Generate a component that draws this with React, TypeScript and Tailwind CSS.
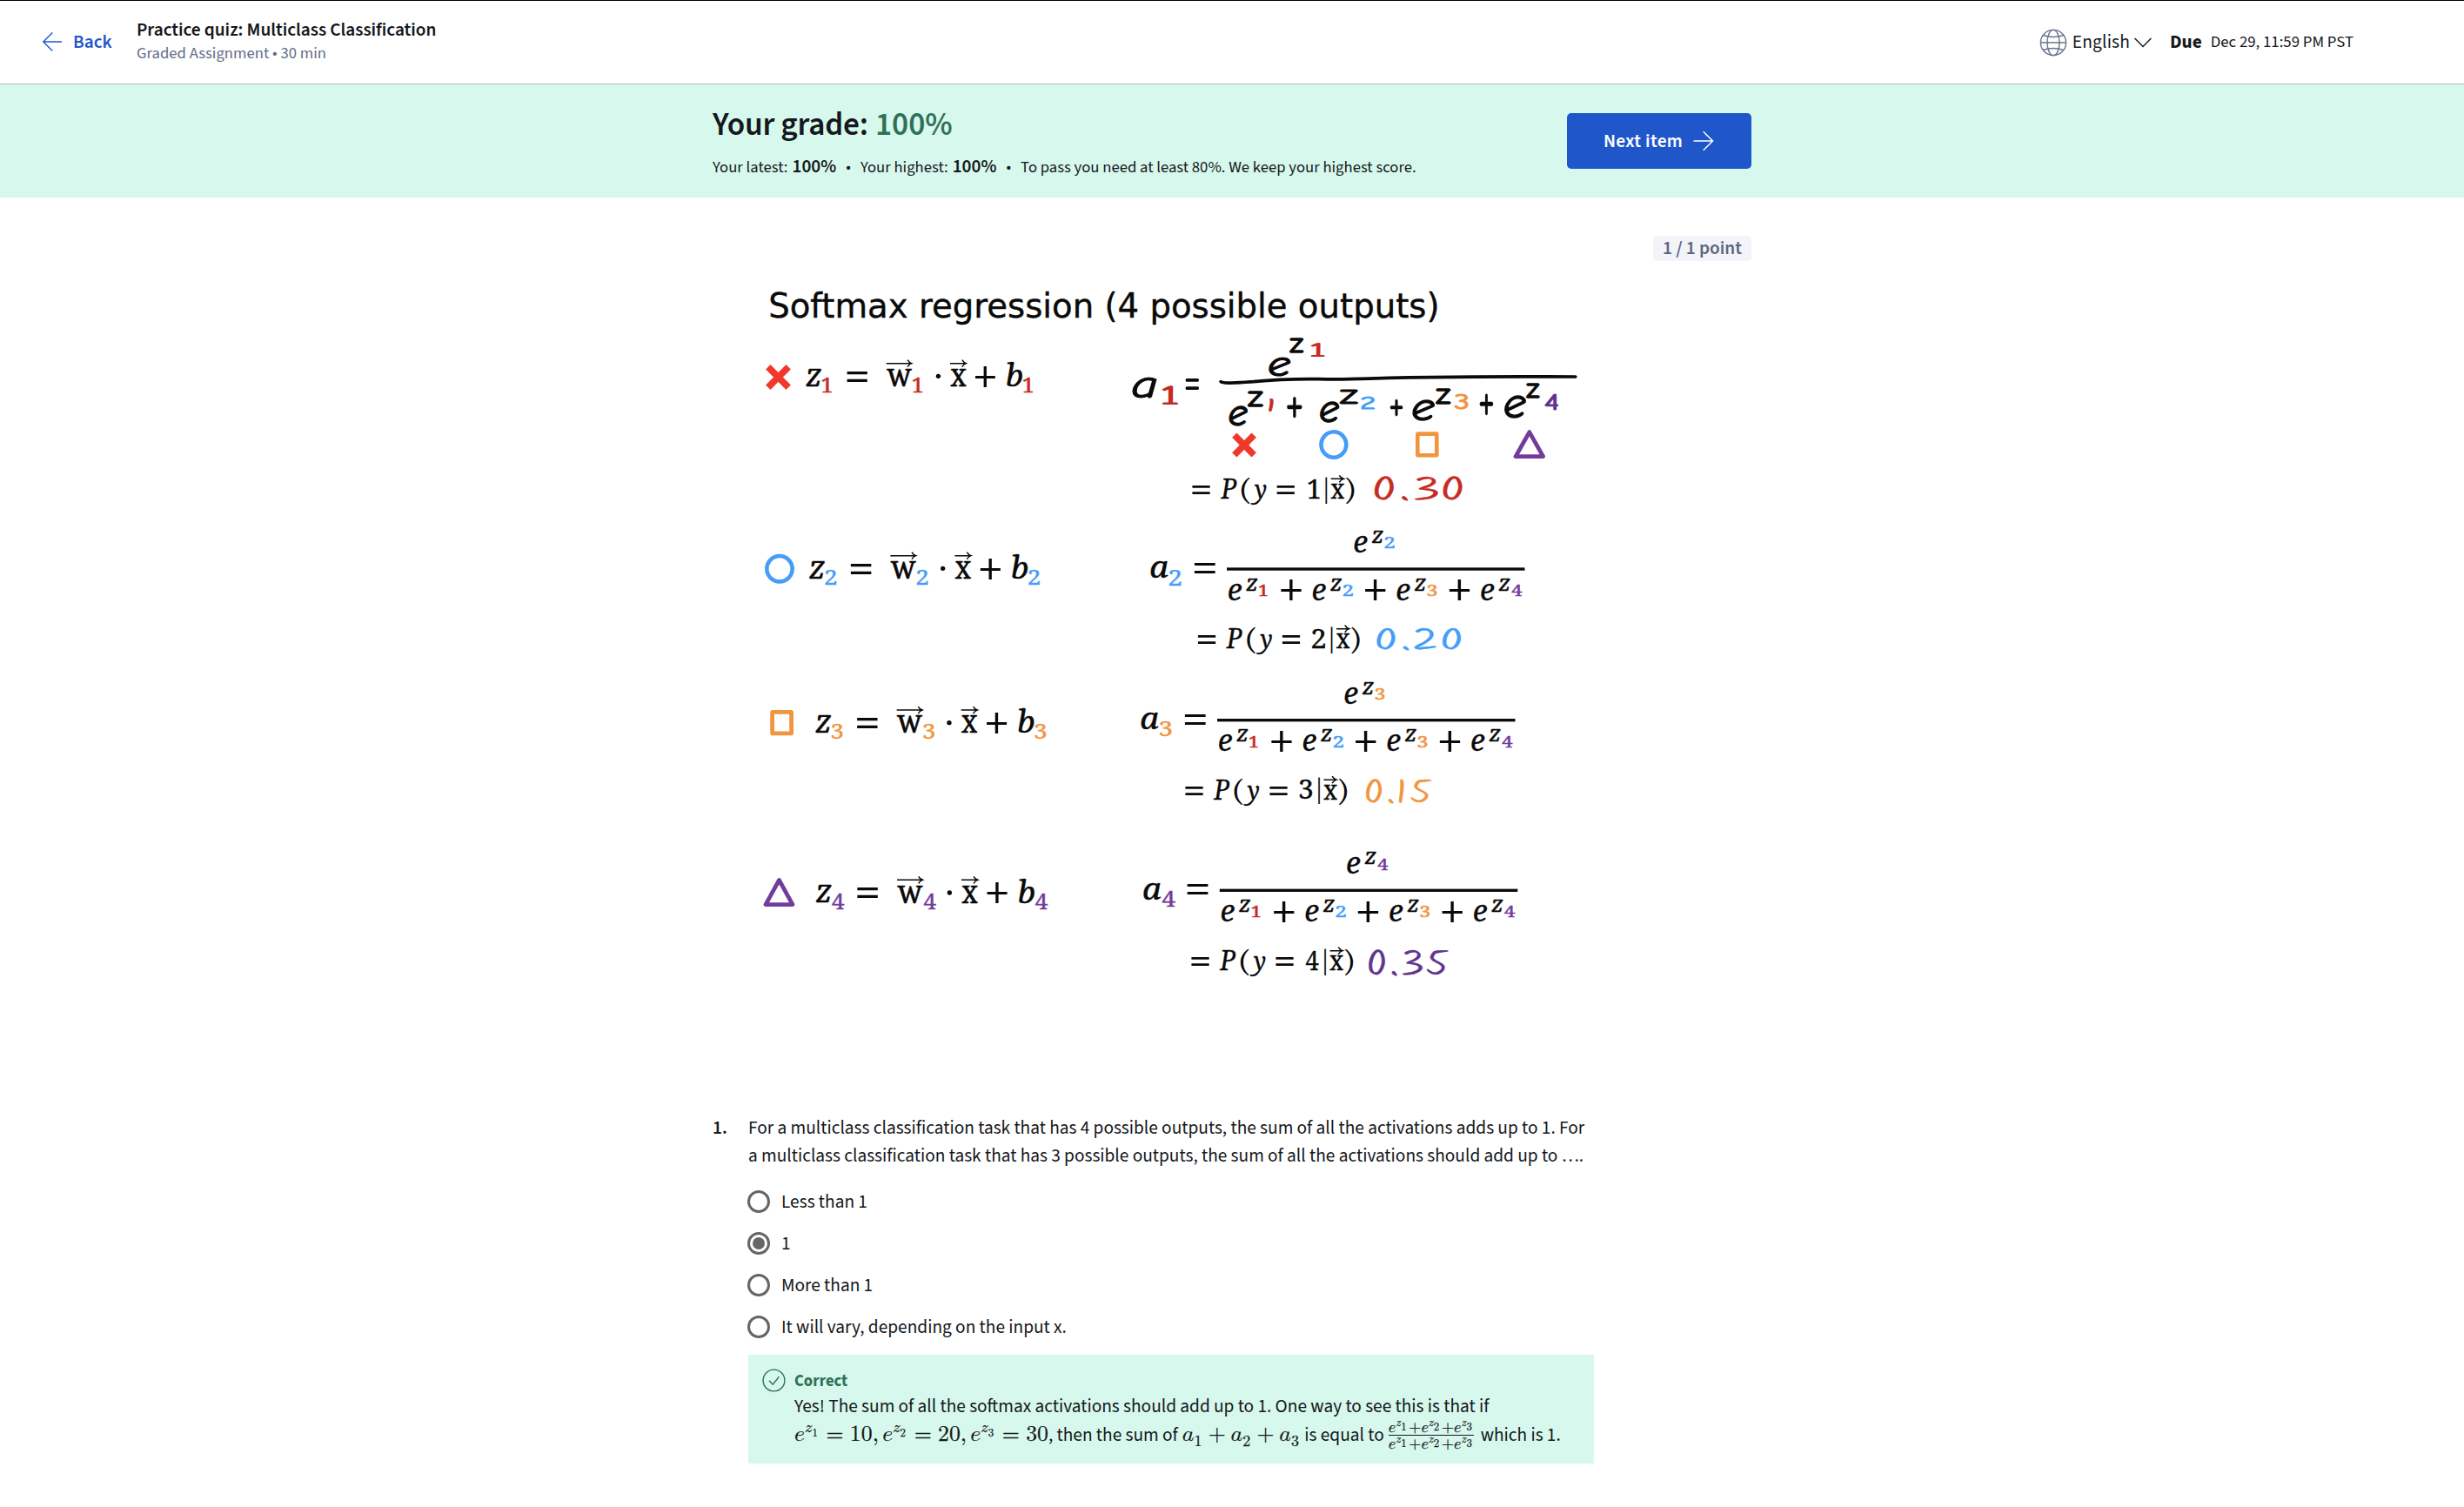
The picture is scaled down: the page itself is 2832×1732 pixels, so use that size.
import React from 'react';

const RED = '#c62b22';
const BLUE = '#459df8';
const ORANGE = '#f1953f';
const PURPLE = '#733c9c';
const SUB = ['', RED, BLUE, ORANGE, PURPLE];

const SERIF = 'Caladea, Cambria, "Liberation Serif", serif';
const DIGITS = '"Noto Serif", "Liberation Serif", serif';
const HAND = '"Comic Neue", "Comic Relief", "DejaVu Sans", sans-serif';
const HAND_ONE = '"Comic Relief", "DejaVu Sans", sans-serif';
const PEN = 'Kalam, "Comic Neue", "DejaVu Sans", sans-serif';
const SANS = 'Verdana, "DejaVu Sans", sans-serif';

const ctx = document.createElement('canvas').getContext('2d')!;

type FitProps = {
  t: string;
  /** ink box: left, top, right, bottom */
  b: [number, number, number, number];
  f?: string;
  i?: boolean;
  w?: number;
  c?: string;
  /** outline width in screen pixels */
  s?: number;
  /** backward slant */
  q?: number;
};

/* Text whose ink fills the given box. */
function Fit({ t, b, f = SERIF, i = false, w = 400, c = '#0a0a0a', s = 0, q = 0 }: FitProps) {
  ctx.font = `${i ? 'italic ' : ''}${w} 100px ${f}`;
  const m = ctx.measureText(t);
  const height = m.actualBoundingBoxAscent + m.actualBoundingBoxDescent;
  const sx = (b[2] - b[0]) / (m.actualBoundingBoxLeft + m.actualBoundingBoxRight - q * height);
  const sy = (b[3] - b[1]) / height;
  const tx = b[0] + sx * m.actualBoundingBoxLeft;
  const ty = b[3] - sy * m.actualBoundingBoxDescent;
  return (
    <text
      transform={`matrix(${sx} 0 ${sx * q} ${sy} ${tx} ${ty})`}
      fontFamily={f}
      fontSize={100}
      fontStyle={i ? 'italic' : 'normal'}
      fontWeight={w}
      fill={c}
      stroke={s ? c : 'none'}
      strokeWidth={s}
      strokeLinejoin="round"
      vectorEffect="non-scaling-stroke"
    >
      {t}
    </text>
  );
}

function Arrow({ x0, x1, y }: { x0: number; x1: number; y: number }) {
  return (
    <path
      d={`M${x0} ${y}H${x1 - 1}M${x1 - 15} ${y - 12}Q${x1 - 10} ${y - 3} ${x1 - 1} ${y}Q${x1 - 10} ${y + 3} ${x1 - 15} ${y + 12}`}
      fill="none"
      stroke="#0a0a0a"
      strokeWidth={4.5}
    />
  );
}

const SUB_W = [0, 33, 37, 38, 42];

/* z_n = w_n . x + b_n */
function Linear({ n, x, y, k = 1 }: { n: number; x: number; y: number; k?: number }) {
  const c = SUB[n];
  const sw = SUB_W[n];
  const sub = (sx: number) => <Fit t={String(n)} f={DIGITS} b={[sx, 27, sx + sw, 80]} c={c} s={0.5} />;
  return (
    <g transform={`translate(${x} ${y}) scale(${k / 3} ${1 / 3})`}>
      <Fit t="z" i b={[0, 0, 54, 59]} s={0.3} />
      {sub(56)}
      <Fit t="=" b={[143, 6, 215, 42]} />
      <Fit t="w" b={[281, 0, 369, 59]} s={0.4} />
      <Arrow x0={280} x1={369} y={-20} />
      {sub(372)}
      <circle cx={461} cy={24} r={8} fill="#0a0a0a" />
      <Fit t="x" b={[503, 0, 558, 59]} s={0.4} />
      <Arrow x0={502} x1={559} y={-20} />
      <Fit t="+" b={[590, -13, 661, 62]} />
      <Fit t="b" i b={[700, -25, 753, 60]} s={0.3} />
      {sub(757)}
    </g>
  );
}

const DIGIT_W = [0, 26, 30, 30, 33];

function Exp({ n, x, y }: { n: number; x: number; y: number }) {
  return (
    <>
      <Fit t="e" i b={[x, y, x + 43, y + 58]} s={0.3} />
      <Fit t="z" i b={[x + 57, y - 18, x + 94, y + 25]} s={0.3} />
      <Fit t={String(n)} f={DIGITS} b={[x + 99, y + 4, x + 99 + DIGIT_W[n], y + 43]} c={SUB[n]} s={0.6} />
    </>
  );
}

/* a_n = e^{z_n} / (e^{z_1} + ... + e^{z_4}) */
function Activation({ n, x, y }: { n: number; x: number; y: number }) {
  return (
    <g transform={`translate(${x} ${y}) scale(${1 / 2.8} ${1 / 3})`}>
      <Fit t="a" i b={[120, 195, 175, 254]} s={0.3} />
      <Fit t={String(n)} f={DIGITS} b={[179, 225, 179 + SUB_W[n], 279]} c={SUB[n]} s={0.5} />
      <Fit t="=" b={[260, 202, 328, 237]} />
      <Exp n={n} x={774} y={108} />
      <rect x={364} y={217} width={959} height={10} fill="#0a0a0a" />
      <Exp n={1} x={369} y={272} />
      <Fit t="+" b={[538, 258, 605, 332]} />
      <Exp n={2} x={640} y={272} />
      <Fit t="+" b={[809, 258, 876, 332]} />
      <Exp n={3} x={911} y={272} />
      <Fit t="+" b={[1080, 258, 1147, 332]} />
      <Exp n={4} x={1182} y={272} />
    </g>
  );
}

/* = P(y = n | x) */
function Prob({ n, x, y }: { n: number; x: number; y: number }) {
  return (
    <g transform={`translate(${x} ${y}) scale(${1 / 2.8} ${1 / 3})`}>
      <Fit t="=" b={[0, 30, 58, 61]} />
      <Fit t="P" i b={[91, 7, 143, 75]} s={0.3} />
      <Fit t="(" b={[157, 0, 185, 94]} />
      <Fit t="y" i f={DIGITS} b={[188, 26, 238, 96]} s={0.3} />
      <Fit t="=" b={[272, 30, 330, 61]} />
      <Fit t={String(n)} f={DIGITS} b={[n === 1 ? 373 : 368, 7, 409, 75]} s={0.4} />
      <Fit t="|" b={[428, 0, 433, 92]} />
      <Fit t="x" b={[445, 26, 489, 75]} s={0.3} />
      <Arrow x0={446} x1={488} y={7} />
      <Fit t=")" b={[494, 0, 521, 94]} />
    </g>
  );
}

function Cross({ b }: { b: [number, number, number, number] }) {
  const [x0, y0, x1, y1] = b;
  const d = 2.8;
  return (
    <path
      d={`M${x0 + d} ${y0 + d}L${x1 - d} ${y1 - d}M${x1 - d} ${y0 + d}L${x0 + d} ${y1 - d}`}
      stroke="#f0392b"
      strokeWidth={7.6}
      fill="none"
    />
  );
}

function Lesson() {
  const hand = { f: HAND, s: 1.4 };
  const pen = { f: PEN, q: 0.14, w: 300, s: 0.6 };
  return (
    <svg className="block h-[840px] w-[972px]" viewBox="860 310 972 840">
      <Fit t="Softmax regression (4 possible outputs)" f={SANS} b={[885.5, 335, 1651.5, 373]} s={0.4} />

      <Cross b={[880, 419, 909, 448]} />
      <Linear n={1} x={926.3} y={424.3} k={0.99} />
      <circle cx={896} cy={653.7} r={14.7} fill="none" stroke={BLUE} strokeWidth={4.6} />
      <Linear n={2} x={930} y={645.3} />
      <rect x={887.6} y={818.3} width={22} height={24.6} rx={0.5} fill="none" stroke={ORANGE} strokeWidth={4.8} strokeLinejoin="round" />
      <Linear n={3} x={937.3} y={822.7} />
      <path d="M895.5 1011.5L880 1039.6H911Z" fill="none" stroke={PURPLE} strokeWidth={4.8} strokeLinejoin="round" />
      <Linear n={4} x={937.7} y={1018} />

      <g transform={`translate(1280 370) scale(${1 / 2.8} ${1 / 3})`}>
        <Fit t="a" i b={[62, 192, 138, 262]} {...hand} />
        <Fit t="1" b={[153, 218, 208, 284]} c={RED} f={HAND_ONE} />
        <Fit t="=" b={[230, 195, 275, 235]} f={HAND} />
        <Fit t="e" i b={[500, 123, 568, 187]} {...hand} />
        <Fit t="z" b={[567, 58, 610, 106]} {...hand} />
        <Fit t="1" b={[632, 73, 680, 122]} c={RED} f={HAND_ONE} />
        <path
          d="M345 206C352 214 400 209 450 206C600 190 640 200 760 197C900 192 1200 187 1486 189"
          fill="none"
          stroke="#0a0a0a"
          strokeWidth={11}
          strokeLinecap="round"
        />
        <Fit t="e" i b={[372, 292, 430, 357]} {...hand} />
        <Fit t="z" b={[432, 240, 480, 290]} {...hand} />
        <Fit t="1" b={[501, 263, 511, 308]} c={RED} f={PEN} w={300} q={0.14} s={0.8} />
        <Fit t="+" b={[558, 258, 607, 330]} f={HAND} s={0.4} />
        <Fit t="e" i b={[665, 277, 725, 346]} {...hand} />
        <Fit t="z" b={[729, 237, 786, 283]} {...hand} />
        <Fit t="2" b={[798, 260, 838, 299]} c={BLUE} {...hand} />
        <Fit t="+" b={[890, 268, 931, 325]} f={HAND} s={0.4} />
        <Fit t="e" i b={[962, 268, 1032, 338]} {...hand} />
        <Fit t="z" b={[1038, 232, 1084, 282]} {...hand} />
        <Fit t="3" b={[1098, 250, 1140, 299]} c={ORANGE} {...hand} />
        <Fit t="+" b={[1178, 245, 1222, 320]} f={HAND} s={0.4} />
        <Fit t="e" i b={[1258, 253, 1326, 330]} {...hand} />
        <Fit t="z" b={[1329, 214, 1370, 261]} {...hand} />
        <Fit t="4" b={[1389, 247, 1430, 302]} c="#5f3590" {...hand} />
      </g>
      <Cross b={[1416, 497.3, 1444, 525.7]} />
      <ellipse cx={1532.9} cy={511} rx={14.4} ry={14.7} fill="none" stroke={BLUE} strokeWidth={4.6} />
      <rect x={1629.3} y={498.6} width={22} height={24.6} rx={0.5} fill="none" stroke={ORANGE} strokeWidth={4.6} strokeLinejoin="round" />
      <path d="M1757.8 496.6L1742 524.6H1773.6Z" fill="none" stroke={PURPLE} strokeWidth={4.8} strokeLinejoin="round" />

      <Prob n={1} x={1370.4} y={548} />
      <Fit t="0.30" b={[1582, 547.5, 1678, 575.5]} c={RED} {...pen} />

      <Activation n={2} x={1280} y={580} />
      <Prob n={2} x={1376.8} y={720.3} />
      <Fit t="0.20" b={[1584.5, 722, 1676.5, 747.5]} c={BLUE} {...pen} />

      <Activation n={3} x={1269} y={753.7} />
      <Prob n={3} x={1362.2} y={893.8} />
      <Fit t="0.15" b={[1572, 895, 1645, 923]} c={ORANGE} {...pen} />

      <Activation n={4} x={1271.8} y={949.3} />
      <Prob n={4} x={1369.3} y={1090.3} />
      <Fit t="0.35" b={[1575, 1091.5, 1664, 1121.5]} c="#5f3590" {...pen} />
    </svg>
  );
}

function Header() {
  return (
    <header className="flex h-[97px] items-center border-t border-b border-t-black border-b-[#b9b9b9] pr-[127px] pl-[48px]">
      <a className="flex w-[109px] items-center text-[#1f57cb]">
        <svg className="h-6 w-6" viewBox="0 0 24 24" fill="none" stroke="currentColor" strokeWidth={1.4}>
          <path d="M23 12H1.8M12.3 1.5L1.8 12L12.3 22.5" />
        </svg>
        <span className="ml-3 font-semibold">Back</span>
      </a>
      <div className="-mt-[3px] flex flex-col">
        <h1 className="leading-7 font-semibold tracking-[-0.04px]">Practice quiz: Multiclass Classification</h1>
        <p className="text-[18.67px] leading-6 text-[#636d87]">Graded Assignment • 30 min</p>
      </div>
      <div className="ml-auto flex items-center">
        <svg className="h-8 w-8 text-[#69738b]" viewBox="0 0 32 32" fill="none" stroke="currentColor" strokeWidth={1.4}>
          <circle cx="16" cy="16" r="14.6" />
          <ellipse cx="16" cy="16" rx="7" ry="14.6" />
          <path d="M1.4 16H30.6M4.3 7.5Q16 11.5 27.7 7.5M4.3 24.5Q16 20.5 27.7 24.5" />
        </svg>
        <span className="ml-1.5 tracking-[0.2px]">English</span>
        <svg className="ml-[5px] h-3 w-5" viewBox="0 0 20 12" fill="none" stroke="#15181c" strokeWidth={1.4}>
          <path d="M0.6 1L10 10.6L19.4 1" />
        </svg>
        <span className="ml-[21px] font-bold">Due</span>
        <span className="mt-0.5 ml-[10px] text-[18.8px]">Dec 29, 11:59 PM PST</span>
      </div>
    </header>
  );
}

function GradeBanner() {
  return (
    <section className="h-[130px] bg-[#d7f8ed]">
      <div className="mx-auto flex h-full w-[1194px] items-center justify-between">
        <div className="pt-0.5">
          <h2 className="text-[37.33px] leading-[48px] font-semibold tracking-[-0.25px]">
            Your grade: <span className="ml-px tracking-normal text-[#2f7156]">100%</span>
          </h2>
          <p className="mt-[10px] flex items-baseline text-[18.67px] leading-7">
            Your latest:<b className="ml-[5px] text-[21.33px] font-semibold">100%</b>
            <span className="mx-[11px]">•</span>
            Your highest:<b className="ml-[5px] text-[21.33px] font-semibold">100%</b>
            <span className="mx-[11px]">•</span>
            To pass you need at least 80%. We keep your highest score.
          </p>
        </div>
        <button className="flex h-16 w-[212px] items-center rounded-[5px] bg-[#1f57cb] pt-px pl-[42px] font-semibold tracking-[0.35px] text-white">
          Next item
          <svg className="-mt-px ml-3 h-6 w-6" viewBox="0 0 24 24" fill="none" stroke="currentColor" strokeWidth={1.5}>
            <path d="M0.5 12H22.5M11.7 1.2L22.5 12L11.7 22.8" />
          </svg>
        </button>
      </div>
    </section>
  );
}

function Option({ label, checked = false }: { label: string; checked?: boolean }) {
  return (
    <label className="flex h-12 items-center">
      <span className="-ml-px flex h-[26px] w-[26px] items-center justify-center rounded-full border-3 border-[#666]">
        {checked && <span className="h-[14px] w-[14px] rounded-full bg-[#666]" />}
      </span>
      <span className="mt-px ml-[13px]">{label}</span>
    </label>
  );
}

function MExp({ n }: { n: number }) {
  return (
    <msup>
      <mi>e</mi>
      <msub>
        <mi>z</mi>
        <mn className="text-[12.9px]">{n}</mn>
      </msub>
    </msup>
  );
}

function MVar({ n }: { n: number }) {
  return (
    <msub>
      <mi>a</mi>
      <mn>{n}</mn>
    </msub>
  );
}

function MSum() {
  return (
    <mrow>
      <MExp n={1} />
      <mo lspace="1px" rspace="0">+</mo>
      <MExp n={2} />
      <mo lspace="1px" rspace="0">+</mo>
      <MExp n={3} />
    </mrow>
  );
}

function Feedback() {
  return (
    <div className="mt-2 flex h-[125px] w-[972px] bg-[#d7f8ed] pt-4 pl-4">
      <svg className="h-[27px] w-[27px] text-[#2f7156]" viewBox="0 0 27 27" fill="none" stroke="currentColor" strokeWidth={1.4}>
        <circle cx="13.5" cy="13.5" r="12.4" />
        <path d="M8 13.8L12.2 18.2L19.4 9.2" />
      </svg>
      <div className="ml-[10px] whitespace-nowrap">
        <p className="text-[18.67px] leading-7 font-bold text-[#2f7156]">Correct</p>
        <p className="h-8 leading-8">Yes! The sum of all the softmax activations should add up to 1. One way to see this is that if</p>
        <div className="flex h-8 items-baseline leading-8 [&_math]:text-[25.8px] [&_math]:[-webkit-text-stroke:0.25px]">
          <math>
            <mrow>
              <MExp n={1} /><mo>=</mo><mn>10</mn><mo>,</mo>
              <MExp n={2} /><mo>=</mo><mn>20</mn><mo>,</mo>
              <MExp n={3} /><mo>=</mo><mn>30</mn>
            </mrow>
          </math>
          <span>, then the sum of</span>
          <math className="ml-[5px]">
            <mrow>
              <MVar n={1} /><mo>+</mo><MVar n={2} /><mo>+</mo><MVar n={3} />
            </mrow>
          </math>
          <span className="ml-[5px]">is equal to</span>
          <math className="ml-[5px]">
            <mfrac>
              <MSum />
              <MSum />
            </mfrac>
          </math>
          <span className="ml-2">which is 1.</span>
        </div>
      </div>
    </div>
  );
}

export default function App() {
  return (
    <div className="min-h-[1732px] bg-white font-['Source_Sans_3','Noto_Sans_CJK_SC',sans-serif] text-[21.33px] text-[#15181c]">
      <Header />
      <GradeBanner />
      <main className="mx-auto w-[1194px]">
        <div className="flex justify-end pt-11">
          <span className="flex h-[29px] w-[113px] items-center justify-center rounded-[5px] bg-[#f2f4fa] font-semibold text-[#5b6780]">
            1 / 1 point
          </span>
        </div>
        <div className="mt-2.5 ml-[41px]">
          <Lesson />
        </div>
        <div className="mt-[131px] flex leading-8">
          <span className="w-[41px] font-semibold">1.</span>
          <div>
            <p className="w-[972px] whitespace-nowrap">
              For a multiclass classification task that has 4 possible outputs, the sum of all the activations adds up to 1. For
              <br />a multiclass classification task that has 3 possible outputs, the sum of all the activations should add up to ….
            </p>
            <div className="mt-3 flex flex-col">
              <Option label="Less than 1" />
              <Option label="1" checked />
              <Option label="More than 1" />
              <Option label="It will vary, depending on the input x." />
            </div>
            <Feedback />
          </div>
        </div>
      </main>
    </div>
  );
}
